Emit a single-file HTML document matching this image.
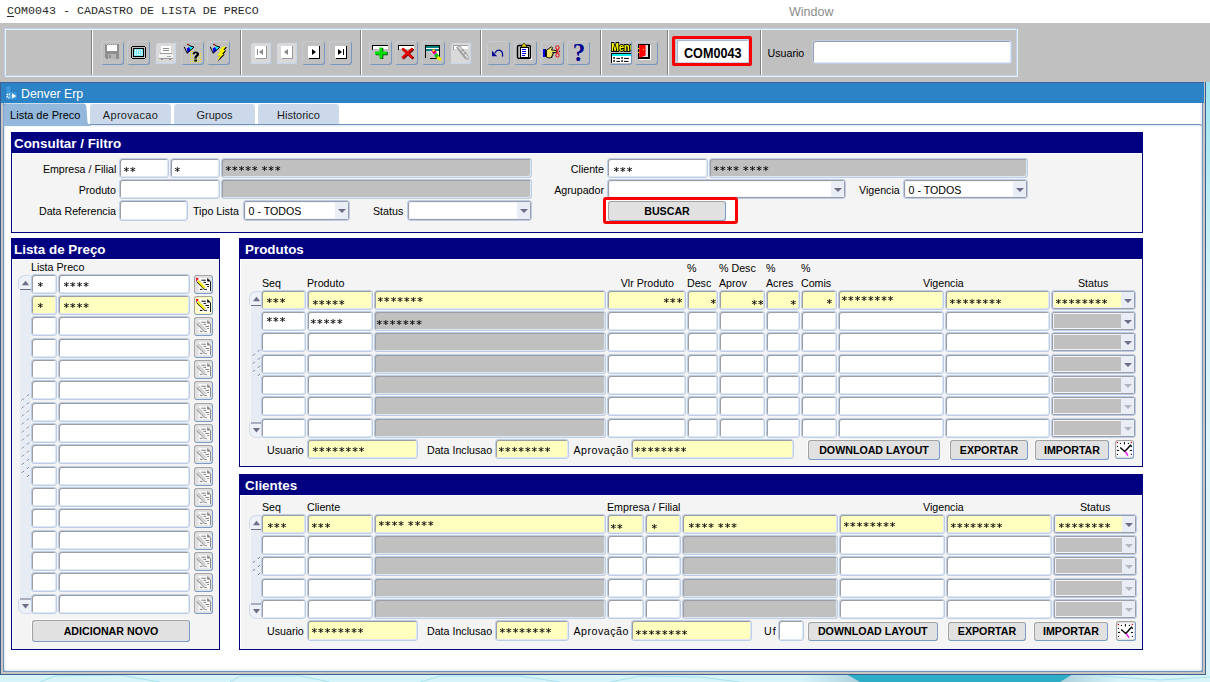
<!DOCTYPE html>
<html lang="pt-BR"><head><meta charset="utf-8"><title>COM0043 - CADASTRO DE LISTA DE PRECO</title>
<style>
html,body{margin:0;padding:0}
body{width:1210px;height:682px;position:relative;overflow:hidden;background:#fff;font-family:"Liberation Sans",sans-serif;font-size:11px;color:#000}
div,span{position:absolute;box-sizing:border-box;white-space:nowrap}
svg{position:absolute;overflow:visible}
.f{border:1px solid #bccde7;border-radius:3px;background:#fff;box-shadow:inset 1px 1px 0 0 #9c9da5,inset -1px -1px 0 0 #dfe7f3;font-family:"DejaVu Sans Mono","Liberation Mono",monospace;font-size:11px;line-height:12px;overflow:hidden;color:#000;-webkit-text-stroke:0.15px #000;word-spacing:-3.6px}
.f span{top:6px;left:6px;will-change:transform}
.l{font-size:10.67px;line-height:13px}
.r{text-align:right}
.b{border:1px solid;border-color:#a2a2a2 #7a9cc6 #7a9cc6 #a2a2a2;border-radius:3px;background:#e1e1e1;box-shadow:-1px -1px 0 #fcfcfc;font-weight:bold;font-size:10.67px;line-height:13px;text-align:center}
.ph{background:#000080;color:#fff;font-weight:bold;font-size:13.4px;line-height:15px}
.ph span{left:4px;top:4px}
.pb{background:#f4f4f4;border:1px solid #000080;border-top:none;box-shadow:inset 1px 1px 0 #fff}
.tb{border-radius:3px;box-shadow:inset -1px -1px 0 #7796c0,inset 1px 1px 0 #c7cbd2}
.tbd{background:#d9d9d9;box-shadow:inset 0 0 0 1px #c0c0c0,inset -2px -2px 0 #c6d6ec,inset 2px 2px 0 #bcc1cb}
.sep{width:2px;border-left:1px solid #808080;border-right:1px solid #fff}
.dd{border:1px solid #bccde7;border-radius:3px;background:#fff;box-shadow:inset 0 0 0 1px #9c9da6,inset 0 0 0 2px #f2f4fa;overflow:hidden;font-size:10.67px;line-height:13px}
.dd i{position:absolute;right:1px;top:1px;bottom:1px;width:13px;background:#e9edf6}
.dd i:after{content:"";position:absolute;left:3px;top:7px;border-left:4px solid transparent;border-right:4px solid transparent;border-top:4px solid #6c6e88}
.dd.dis i:after{border-top-color:#b4b6c4}
.dd span{left:4.5px;top:4px}
.y{background:#ffffc0}
.g{background:#c0c0c0}
.sb{background:#e9edf6;border-radius:6px;border:1px solid #d3deee}
</style></head>
<body>
<div style="left:0;top:0;width:1210px;height:23px;background:#fff"></div>
<div style="left:0;top:23px;width:1210px;height:59px;background:#c0c0c0"></div>
<div style="left:1204px;top:82px;width:6px;height:600px;background:linear-gradient(#9ee6f2,#b4ebf4 14%,#d4f3f8 34%,#dff6fa 60%,#d8f4f9)"></div>
<div style="left:0;top:672px;width:1210px;height:10px;background:#d6f4f9"></div>
<svg style="left:0;top:674px" width="1210" height="8" viewBox="0 674 1210 8"><defs><linearGradient id="hl" x1="0" x2="1" y1="0" y2="0"><stop offset="0" stop-color="#a8ccd8" stop-opacity="0"/><stop offset="1" stop-color="#a8ccd8" stop-opacity="0.9"/></linearGradient><linearGradient id="hr" x1="0" x2="1" y1="0" y2="0"><stop offset="0" stop-color="#a8ccd8" stop-opacity="0.9"/><stop offset="1" stop-color="#a8ccd8" stop-opacity="0"/></linearGradient></defs><path d="M800 674 L847 674 L862 682 L800 682z" fill="url(#hl)"/><path d="M1072 674 L1120 674 L1120 682 L1058 682z" fill="url(#hr)"/><path d="M846 674 L1073 674 L1060 682 L860 682z" fill="#2eaec6"/><g stroke="#a9e1ec" stroke-width="1" fill="none"><path d="M40 682 L55 676 L120 675 L160 682"/><path d="M230 682 L240 676 L300 676 L330 682"/><path d="M420 682 L440 676 L520 676 L560 682"/><path d="M610 682 L640 676 L700 677 L740 682"/><path d="M1100 676 L1160 680 L1210 677"/></g></svg>
<div style="left:7px;top:4px;font-family:'Liberation Mono',monospace;font-size:11.67px;line-height:14px;color:#2a2a2a"><u style="text-underline-offset:2px">C</u>OM0043 - CADASTRO DE LISTA DE PRECO</div>
<div style="left:789px;top:5px;font-size:12.5px;line-height:14px;color:#8c8c8c">Window</div>
<div class="" style="left:5px;top:29px;width:1013px;height:48px;border:1px solid #eaf0f9"></div>
<div class="" style="left:4px;top:28px;width:1013px;height:48px;border:1px solid #bdd1ee"></div>
<div class="sep" style="left:91px;top:30px;width:2px;height:45px;"></div>
<div class="sep" style="left:240px;top:30px;width:2px;height:45px;"></div>
<div class="sep" style="left:360px;top:30px;width:2px;height:45px;"></div>
<div class="sep" style="left:480px;top:30px;width:2px;height:45px;"></div>
<div class="sep" style="left:600px;top:30px;width:2px;height:45px;"></div>
<div class="sep" style="left:667px;top:30px;width:2px;height:45px;"></div>
<div class="sep" style="left:760px;top:30px;width:2px;height:45px;"></div>
<div class="tb" style="left:101px;top:41px;width:23px;height:24px;"></div>
<div class="tb" style="left:127px;top:41px;width:23px;height:24px;"></div>
<div class="tb tbd" style="left:154px;top:41px;width:23px;height:24px;"></div>
<div class="tb" style="left:181px;top:41px;width:23px;height:24px;"></div>
<div class="tb" style="left:207px;top:41px;width:23px;height:24px;"></div>
<div class="tb tbd" style="left:249px;top:41px;width:23px;height:24px;"></div>
<div class="tb tbd" style="left:275px;top:41px;width:23px;height:24px;"></div>
<div class="tb" style="left:302px;top:41px;width:23px;height:24px;"></div>
<div class="tb" style="left:329px;top:41px;width:23px;height:24px;"></div>
<div class="tb" style="left:369px;top:41px;width:23px;height:24px;"></div>
<div class="tb" style="left:395px;top:41px;width:23px;height:24px;"></div>
<div class="tb" style="left:422px;top:41px;width:23px;height:24px;"></div>
<div class="tb tbd" style="left:449px;top:41px;width:23px;height:24px;"></div>
<div class="tb" style="left:487px;top:41px;width:23px;height:24px;"></div>
<div class="tb" style="left:514px;top:41px;width:23px;height:24px;"></div>
<div class="tb" style="left:541px;top:41px;width:23px;height:24px;"></div>
<div class="tb" style="left:567px;top:41px;width:23px;height:24px;"></div>
<div class="tb" style="left:609px;top:41px;width:23px;height:24px;"></div>
<div class="tb" style="left:635px;top:41px;width:23px;height:24px;"></div>
<svg style="left:104px;top:44px" width="16" height="16" viewBox="0 0 16 16" shape-rendering="crispEdges"><path d="M1 0h14v15h-13l-1 -1z" fill="#8e8e8e"/><rect x="3" y="1" width="10" height="6" fill="#fff"/><rect x="4" y="10" width="8" height="5" fill="#b4b4b4"/><rect x="5" y="11" width="2" height="3" fill="#8e8e8e"/><path d="M2 0h12" stroke="#c0c0c0" stroke-dasharray="1 1"/></svg>
<svg style="left:131px;top:46px" width="15" height="13" viewBox="0 0 15 13" shape-rendering="crispEdges"><rect x="0.5" y="0.5" width="14" height="12" rx="2" fill="#c0c0c0" stroke="#000" stroke-width="1"/><rect x="2.5" y="2.5" width="10" height="8" fill="#7fe8f0" stroke="#000" stroke-width="1"/><g fill="#fff"><rect x="4" y="4" width="1" height="1"/><rect x="6" y="4" width="1" height="1"/><rect x="8" y="4" width="1" height="1"/><rect x="10" y="4" width="1" height="1"/><rect x="4" y="6" width="1" height="1"/><rect x="6" y="6" width="1" height="1"/><rect x="8" y="6" width="1" height="1"/><rect x="10" y="6" width="1" height="1"/><rect x="4" y="8" width="1" height="1"/><rect x="6" y="8" width="1" height="1"/><rect x="8" y="8" width="1" height="1"/><rect x="10" y="8" width="1" height="1"/></g></svg>
<svg style="left:158px;top:45px" width="16" height="16" viewBox="0 0 16 16" shape-rendering="crispEdges"><rect x="3" y="1" width="10" height="7" fill="#fff"/><rect x="5" y="3" width="6" height="1" fill="#8c8c8c"/><rect x="5" y="5" width="6" height="1" fill="#8c8c8c"/><path d="M2 8h12" stroke="#9a9a9a"/><rect x="1" y="9" width="14" height="4" fill="#f4f4f4"/><rect x="9" y="11" width="4" height="1" fill="#a8a8a8"/><rect x="1" y="13" width="14" height="1" fill="#9a9a9a"/><rect x="3" y="14" width="2" height="1" fill="#8c8c8c"/><rect x="11" y="14" width="2" height="1" fill="#8c8c8c"/></svg>
<svg style="left:184px;top:44px" width="18" height="19" viewBox="0 0 18 19" shape-rendering="crispEdges"><g shape-rendering="auto"><path d="M2.7 4.6L5.2 3.1L6.7 6.1L3.5 8.9z" fill="#0000e6"/><path d="M5.2 3.1L5.9 2.2L9.5 3.1L6.7 6.1z" fill="#00eeff"/><path d="M0.2 2.9L3.2 9.3L10 3.1L6.1 1.9" fill="none" stroke="#000" stroke-width="1"/><path d="M3.1 0.2L6.1 1.6" stroke="#000" stroke-width="0.9"/><circle cx="4.4" cy="0.4" r="0.7" fill="#f00000"/></g><g fill="#f4ec00" shape-rendering="auto"><rect x="6" y="7" width="1" height="1"/><rect x="8.05" y="7" width="1" height="1"/><rect x="6" y="9.03" width="1" height="1"/><rect x="8.05" y="9.03" width="1" height="1"/><rect x="16.25" y="9.03" width="1" height="1"/><rect x="6" y="11.06" width="1" height="1"/><rect x="8.05" y="11.06" width="1" height="1"/><rect x="14.2" y="11.06" width="1" height="1"/><rect x="16.25" y="11.06" width="1" height="1"/><rect x="6" y="13.09" width="1" height="1"/><rect x="8.05" y="13.09" width="1" height="1"/><rect x="14.2" y="13.09" width="1" height="1"/><rect x="16.25" y="13.09" width="1" height="1"/><rect x="6" y="15.12" width="1" height="1"/><rect x="8.05" y="15.12" width="1" height="1"/><rect x="10.1" y="15.12" width="1" height="1"/><rect x="12.15" y="15.12" width="1" height="1"/><rect x="14.2" y="15.12" width="1" height="1"/><rect x="16.25" y="15.12" width="1" height="1"/><rect x="6" y="17.15" width="1" height="1"/><rect x="8.05" y="17.15" width="1" height="1"/><rect x="10.1" y="17.15" width="1" height="1"/><rect x="12.15" y="17.15" width="1" height="1"/><rect x="14.2" y="17.15" width="1" height="1"/><rect x="16.25" y="17.15" width="1" height="1"/></g><path d="M8.6 10.2c0 -3.6 6.4 -3.6 6.4 0c0 2.2 -2.4 2 -2.4 4.2h-2.2c0 -3 2.2 -3 2.2 -4.4c0 -1.2 -1.9 -1.2 -1.9 0.2zM10.3 15.4h2.6v2h-2.6z" fill="#000" shape-rendering="auto"/></svg>
<svg style="left:210px;top:44px" width="18" height="19" viewBox="0 0 18 19" shape-rendering="crispEdges"><g shape-rendering="auto"><path d="M2.7 4.6L5.2 3.1L6.7 6.1L3.5 8.9z" fill="#0000e6"/><path d="M5.2 3.1L5.9 2.2L9.5 3.1L6.7 6.1z" fill="#00eeff"/><path d="M0.2 2.9L3.2 9.3L10 3.1L6.1 1.9" fill="none" stroke="#000" stroke-width="1"/><path d="M3.1 0.2L6.1 1.6" stroke="#000" stroke-width="0.9"/><circle cx="4.4" cy="0.4" r="0.7" fill="#f00000"/></g><g shape-rendering="auto"><path d="M12.5 2.8L16 2.5L13.3 6L15.3 6L12.2 10L13.8 10L6.5 17.3L9.8 11.8L7.2 11.8L10.6 7L9 7z" fill="#000" transform="translate(1,0.5)"/><path d="M12.5 2.8L16 2.5L13.3 6L15.3 6L12.2 10L13.8 10L6.5 17.3L9.8 11.8L7.2 11.8L10.6 7L9 7z" fill="#fbf600"/></g></svg>
<svg style="left:255px;top:46px" width="13" height="14" viewBox="0 0 13 14" shape-rendering="crispEdges"><rect x="0" y="0" width="11" height="12" fill="#fff"/><path d="M1 12.5h11M11.5 0v13" stroke="#9a9a9a" stroke-width="1" fill="none"/><rect x="2" y="3" width="1" height="6" fill="#8a8a8a"/><path d="M8 3v6l-4 -3z" fill="#8a8a8a" shape-rendering="auto"/></svg>
<svg style="left:281px;top:46px" width="13" height="14" viewBox="0 0 13 14" shape-rendering="crispEdges"><rect x="0" y="0" width="11" height="12" fill="#fff"/><path d="M1 12.5h11M11.5 0v13" stroke="#9a9a9a" stroke-width="1" fill="none"/><path d="M7 3v6l-4 -3z" fill="#8a8a8a" shape-rendering="auto"/></svg>
<svg style="left:308px;top:46px" width="13" height="14" viewBox="0 0 13 14" shape-rendering="crispEdges"><rect x="0" y="0" width="11" height="12" fill="#fff"/><path d="M1 12.5h11M11.5 0v13" stroke="#000" stroke-width="1" fill="none"/><path d="M4 3v6l4 -3z" fill="#000" shape-rendering="auto"/></svg>
<svg style="left:335px;top:46px" width="13" height="14" viewBox="0 0 13 14" shape-rendering="crispEdges"><rect x="0" y="0" width="11" height="12" fill="#fff"/><path d="M1 12.5h11M11.5 0v13" stroke="#000" stroke-width="1" fill="none"/><path d="M3 3v6l4 -3z" fill="#000" shape-rendering="auto"/><rect x="8" y="3" width="1" height="6" fill="#000"/></svg>
<svg style="left:372px;top:45px" width="16" height="14" viewBox="0 0 16 14" shape-rendering="crispEdges"><rect x="0" y="0" width="16" height="4" fill="#fff"/><path d="M0 4.5v-4h16" stroke="#000" fill="none"/><path d="M7.4 2.4h3v4h4.4v3.2h-4.4v3.8h-3v-3.8h-4.4v-3.2h4.4z" fill="#004400" transform="translate(0.9,0.7)" shape-rendering="auto"/><path d="M7.4 2.4h3v4h4.4v3.2h-4.4v3.8h-3v-3.8h-4.4v-3.2h4.4z" fill="#00e000" shape-rendering="auto"/></svg>
<svg style="left:398px;top:45px" width="16" height="14" viewBox="0 0 16 14" shape-rendering="crispEdges"><rect x="0" y="0" width="16" height="4" fill="#fff"/><path d="M0 4.5v-4h16" stroke="#000" fill="none"/><g shape-rendering="auto"><path d="M4.2 3.4L14.6 13M14.6 3.4L4.2 13" stroke="#500000" stroke-width="2.4" fill="none" transform="translate(0.8,0.6)"/><path d="M4.2 3.4L14.6 13M14.6 3.4L4.2 13" stroke="#e80000" stroke-width="2.4" fill="none"/></g></svg>
<svg style="left:425px;top:45px" width="17" height="16" viewBox="0 0 17 16" shape-rendering="crispEdges"><rect x="0.5" y="0.5" width="14" height="12" fill="#fff" stroke="#000"/><rect x="1" y="1" width="13" height="2" fill="#008080"/><rect x="1" y="4" width="13" height="2" fill="#008080"/><path d="M1 6h4l6 7h-10z" fill="#c0c0c0"/><rect x="5" y="13" width="9" height="1" fill="#000"/><g shape-rendering="auto"><path d="M6 6l3 -2l3 4l-3 2z" fill="#f000d0"/><path d="M7 5l2 -1l1 1.5l-2 1.5z" fill="#f0e000"/><path d="M9 10l3 -2l2 3l-3 2z" fill="#00c000"/><path d="M11 13l3 -2l3 4l-2 1z" fill="#f0f000"/><path d="M8 8l3 -2" stroke="#e00000" stroke-width="1.5"/></g></svg>
<svg style="left:452px;top:45px" width="17" height="16" viewBox="0 0 17 16" shape-rendering="crispEdges"><rect x="1" y="0" width="15" height="4" fill="#fff"/><path d="M1 4.5v-4h15" stroke="#a0a0a0" fill="none"/><g shape-rendering="auto"><path d="M4 2.5L7.5 0L17 11.5L16.5 15L13 14z" fill="#a4a4a4"/><path d="M6.6 1.6L16 13" stroke="#e8e8e8" stroke-width="1.3"/><path d="M8.5 7L12 4.5M10.8 10L14.3 7.5" stroke="#888" stroke-width="1"/></g></svg>
<svg style="left:491px;top:48px" width="13" height="10" viewBox="0 0 13 10" shape-rendering="crispEdges"><g shape-rendering="auto"><path d="M1 8.2l0 -5.4l5.2 5.4z" fill="#000090"/><path d="M4 5c2.5 -4.5 8.5 -3.5 7.5 3.6" stroke="#000090" stroke-width="1.25" fill="none"/></g></svg>
<svg style="left:517px;top:43px" width="16" height="18" viewBox="0 0 16 18" shape-rendering="crispEdges"><rect x="1.5" y="16" width="13.5" height="1" fill="#fff"/><rect x="14.3" y="4" width="1" height="12.5" fill="#fff"/><rect x="0.5" y="2.5" width="13" height="13" rx="1.5" fill="#c0c0c0" stroke="#000" stroke-width="1.4" shape-rendering="auto"/><rect x="3" y="4" width="8" height="10" fill="#fff" stroke="#000"/><path d="M4 4l3 -4l3 4z" fill="#f0e000" stroke="#000" stroke-width="0.6" shape-rendering="auto"/><rect x="5" y="6" width="4" height="1" fill="#0000e0"/><rect x="5" y="8" width="4" height="1" fill="#0000e0"/><rect x="5" y="10" width="4" height="1" fill="#0000e0"/><rect x="5" y="12" width="3" height="1" fill="#0000e0"/></svg>
<svg style="left:543px;top:45px" width="18" height="14" viewBox="0 0 18 14" shape-rendering="crispEdges"><rect x="0" y="4" width="2" height="8" fill="#0000e0"/><rect x="2" y="4" width="1" height="8" fill="#000"/><g shape-rendering="auto"><path d="M3.5 5L6 3.5L8.5 1.8L9.5 2.8L8.5 5L13.6 5.6L13.6 7.4L10 7.6L10.4 9L9.4 9.4L10 10.6L8.8 11L9 12.4L6 13L3.5 12.2z" fill="#ebe266" stroke="#000" stroke-width="0.9"/><path d="M9 7.6H10M9 9.4H9.6M8.6 11H9" stroke="#000" stroke-width="0.7"/><ellipse cx="14.5" cy="2.6" rx="1.7" ry="1.9" fill="none" stroke="#f00000" stroke-width="1"/><ellipse cx="14.5" cy="10.2" rx="1.7" ry="1.9" fill="none" stroke="#f00000" stroke-width="1"/><path d="M13.4 4.4l2.2 3.8M15.6 4.4l-2.2 3.8" stroke="#f00000" stroke-width="0.9"/><rect x="16" y="5.8" width="1" height="1" fill="#000"/></g></svg>
<div style="left:572px;top:41px;width:14px;height:22px;font-family:'Liberation Serif',serif;font-weight:bold;font-size:25px;line-height:24px;color:#000090;text-align:center">?</div>
<svg style="left:611px;top:42px;overflow:hidden;will-change:transform" width="19.5" height="21" viewBox="0 0 19.5 21"><text x="0.3" y="9.2" font-family="Liberation Sans, sans-serif" font-weight="bold" font-size="10.6" fill="#ffff00" stroke="#000" stroke-width="1.9" paint-order="stroke" textLength="24" lengthAdjust="spacingAndGlyphs">Menu</text><g shape-rendering="crispEdges"><rect x="0" y="11" width="19.5" height="1" fill="#000"/><rect x="0.7" y="11.8" width="19" height="1.9" fill="#00f0f8"/><rect x="0" y="13.7" width="19.5" height="0.8" fill="#000"/><rect x="0.7" y="14.4" width="19" height="6.2" fill="#fff"/><rect x="0" y="11" width="0.8" height="9.6" fill="#000"/></g><g fill="#000"><rect x="2.3" y="15.2" width="1.6" height="1.6"/><rect x="5.4" y="15.9" width="3.6" height="1"/><rect x="10.3" y="15.2" width="1.6" height="1.6"/><rect x="13" y="15.9" width="5" height="1"/><rect x="2.3" y="18.2" width="1.6" height="1.6"/><rect x="5.4" y="18.9" width="3.6" height="1"/><rect x="10.3" y="18.2" width="1.6" height="1.6"/><rect x="13" y="18.9" width="4.4" height="1"/></g></svg>
<svg style="left:638px;top:44px" width="14" height="17" viewBox="0 0 14 17" shape-rendering="crispEdges"><g shape-rendering="auto"><rect x="1" y="15" width="12" height="1" fill="#fff"/><rect x="12" y="1" width="1" height="15" fill="#fff"/><rect x="0.5" y="0.5" width="11" height="14" fill="#e2e2e2" stroke="#000" stroke-width="1"/><rect x="10" y="1" width="1" height="13.5" fill="#000"/><rect x="1" y="13" width="10" height="1.6" fill="#000"/><path d="M1.2 1H7.6V11.4L5 12.6L3 13.6H1.2z" fill="#ff0000"/><rect x="4.9" y="5" width="1.2" height="1.2" fill="#ffe000"/><rect x="0" y="4" width="1.1" height="1" fill="#ffe000"/><rect x="0" y="8" width="1.1" height="1" fill="#ffe000"/></g></svg>
<div class="" style="left:672px;top:36px;width:80px;height:30px;border:3px solid #f80000;border-radius:2px;background:#c0c0c0"></div>
<div class="" style="left:676px;top:39px;width:73px;height:24px;background:#fff;border:1px solid #c6d6ec;border-radius:2px;box-shadow:inset 1px 1px 0 #a9b6cc"></div>
<div style="left:683.6px;top:45.5px;font-weight:bold;font-size:13.8px;line-height:16px;transform:scaleX(0.915);transform-origin:0 0">COM0043</div>
<div class="l" style="left:767.5px;top:47px;">Usuario</div>
<div class="f" style="left:812px;top:40px;width:200px;height:24px;"></div>
<div style="left:0;top:82px;width:1206px;height:593px;background:#fff;border:1px solid #3f5f93;border-top:none;box-shadow:inset 2px 0 0 #c9c5c1,inset -2px -2px 0 #c9c5c1,inset 3px 0 0 #6c8cba,inset -3px -3px 0 #6c8cba,inset 5px 0 0 #eef2fa,inset -5px -5px 0 #eef2fa"></div>
<div style="left:1px;top:82px;width:1203px;height:21px;background:#2c83c5;border-top:1px solid #3f619b"></div>
<svg style="left:5px;top:85px" width="13" height="16" viewBox="0 0 13 16"><path d="M0.7 0.6H6.3V6.6H12.3V15H0.7z" fill="#3b98db" stroke="#2a7abd" stroke-width="0.9"/><path d="M8 1.2L11.4 4.6H8z" fill="#3b98db" stroke="#2a7abd" stroke-width="0.7"/><circle cx="3.9" cy="10.9" r="1.8" fill="none" stroke="#fff" stroke-width="1.7" stroke-dasharray="1.1 0.8"/><rect x="5.2" y="7.6" width="1.6" height="6.8" fill="#3b98db"/><path d="M7 8.2L11.3 10.9L7 13.6z" fill="#fff"/></svg>
<div style="left:21px;top:87px;color:#fff;font-size:12.3px;line-height:14px">Denver Erp</div>
<div class="" style="left:3px;top:124px;width:1200px;height:547.5px;border:1px solid #6f93bd;border-radius:3px;box-shadow:inset 0 0 0 1px #e6ecf6,inset 0 0 0 2px #f3f6fb;background:#fff"></div>
<div class="" style="left:90px;top:103.5px;width:81px;height:20.5px;background:#cbd9eb;border-radius:3px 3px 0 0"></div>
<div style="left:90px;top:108.5px;width:81px;text-align:center;font-size:11px;line-height:13px;color:#1c1c1c;letter-spacing:0.3px;">Aprovacao</div>
<div class="" style="left:174px;top:103.5px;width:81px;height:20.5px;background:#cbd9eb;border-radius:3px 3px 0 0"></div>
<div style="left:174px;top:108.5px;width:81px;text-align:center;font-size:11px;line-height:13px;color:#1c1c1c;">Grupos</div>
<div class="" style="left:258px;top:103.5px;width:81px;height:20.5px;background:#cbd9eb;border-radius:3px 3px 0 0"></div>
<div style="left:258px;top:108.5px;width:81px;text-align:center;font-size:11px;line-height:13px;color:#1c1c1c;">Historico</div>
<svg style="left:3px;top:103px" width="87.5" height="23" viewBox="0 0 87.5 23"><path d="M0 23V3.5Q0 0.5 3 0.5H80.5Q83 0.5 83.3 3L84.5 19Q84.8 21.5 87.5 21.5V23z" fill="#94b8dc"/><path d="M0.5 23V3.5Q0.5 0.8 3 0.8" fill="none" stroke="#7fa5d0" stroke-width="1"/></svg>
<div style="left:3px;top:108.5px;width:84.5px;text-align:center;font-size:11px;line-height:13px;color:#000;">Lista de Preco</div>
<div class="" style="left:4px;top:124px;width:83px;height:1px;background:#94b8dc"></div>
<div class="ph" style="left:11px;top:132px;width:1132px;height:21px;"><span style="left:3px">Consultar / Filtro</span></div>
<div class="pb" style="left:11px;top:153px;width:1132px;height:80px;"></div>
<div class="l r" style="right:1093.7px;top:163px;">Empresa / Filial</div>
<div class="l r" style="right:1094px;top:184px;">Produto</div>
<div class="l r" style="right:1094px;top:204.5px;">Data Referencia</div>
<div class="f " style="left:119px;top:158px;width:50px;height:20px;"><span style="left:3.2px;top:7px">**</span></div>
<div class="f " style="left:170px;top:158px;width:50px;height:20px;"><span style="left:2.7px;top:7px">*</span></div>
<div class="f g" style="left:221px;top:158px;width:311px;height:20px;"><span style="left:3px;top:5.9px">***** ***</span></div>
<div class="f " style="left:119px;top:179px;width:101px;height:20px;"></div>
<div class="f g" style="left:221px;top:179px;width:311px;height:20px;"></div>
<div class="f " style="left:119px;top:200px;width:69px;height:21px;"></div>
<div class="l" style="left:193px;top:204.5px;">Tipo Lista</div>
<div class="dd " style="left:243px;top:200px;width:107px;height:21px;"><span style="">0 - TODOS</span><i></i></div>
<div class="l" style="left:373px;top:204.5px;">Status</div>
<div class="dd " style="left:407px;top:200px;width:125px;height:21px;"><i></i></div>
<div class="l r" style="right:606px;top:163px;">Cliente</div>
<div class="l r" style="right:606px;top:184px;">Agrupador</div>
<div class="f " style="left:607px;top:158px;width:101px;height:20px;"><span style="left:4.8px;top:7px">***</span></div>
<div class="f g" style="left:709px;top:158px;width:319px;height:20px;"><span style="left:2.8px;top:6px">**** ****</span></div>
<div class="dd " style="left:607px;top:179px;width:239px;height:20px;"><i></i></div>
<div class="l" style="left:859px;top:184px;">Vigencia</div>
<div class="dd " style="left:903px;top:179px;width:125px;height:20px;"><span style="">0 - TODOS</span><i></i></div>
<div class="" style="left:603px;top:197px;width:135px;height:27px;border:3px solid #fb0000;border-radius:3px;background:#fff"></div>
<div class="b" style="left:608px;top:201px;width:118px;height:20px;padding-top:3.2px">BUSCAR</div>
<div class="ph" style="left:11px;top:238px;width:209px;height:21px;"><span style="left:3px">Lista de Preço</span></div>
<div class="pb" style="left:11px;top:259px;width:209px;height:391px;"></div>
<div class="l" style="left:31px;top:260.5px;">Lista Preco</div>
<div class="" style="left:18px;top:275px;width:13px;height:14px;background:#eef1f8;border:1px solid #cfdbec;border-bottom:none;border-right:none;border-radius:7px 2px 0 0"></div>
<div class="" style="left:18px;top:598.5px;width:13px;height:15px;background:#eef1f8;border:1px solid #cfdbec;border-top:none;border-right:none;border-radius:0 0 2px 7px"></div>
<div class="" style="left:20px;top:289px;width:11px;height:309.5px;background:#e7ebf4"></div>
<svg style="left:18px;top:275px" width="13" height="338.5" viewBox="0 0 13 338.5"><path d="M3.9 10.2 l3.6 -4.4 l3.6 4.4z" fill="#6c6e88"/><rect x="2" y="14" width="11" height="1" fill="#6c6e88"/><path d="M3.9 329.1 l3.6 4.4 l3.6 -4.4z" fill="#6c6e88"/><rect x="2" y="323.5" width="11" height="1" fill="#6c6e88"/>
<path d="M8.9 121.4 l2 -2" stroke="#5f6f98" stroke-width="1" fill="none"/><path d="M8.9 122.4 l2 -2" stroke="#fff" stroke-width="0.8" fill="none"/><path d="M3.8 125.43 l2 -2" stroke="#5f6f98" stroke-width="1" fill="none"/><path d="M3.8 126.43 l2 -2" stroke="#fff" stroke-width="0.8" fill="none"/><path d="M8.9 129.46 l2 -2" stroke="#5f6f98" stroke-width="1" fill="none"/><path d="M8.9 130.46 l2 -2" stroke="#fff" stroke-width="0.8" fill="none"/><path d="M3.8 133.49 l2 -2" stroke="#5f6f98" stroke-width="1" fill="none"/><path d="M3.8 134.49 l2 -2" stroke="#fff" stroke-width="0.8" fill="none"/><path d="M8.9 137.52 l2 -2" stroke="#5f6f98" stroke-width="1" fill="none"/><path d="M8.9 138.52 l2 -2" stroke="#fff" stroke-width="0.8" fill="none"/><path d="M3.8 141.55 l2 -2" stroke="#5f6f98" stroke-width="1" fill="none"/><path d="M3.8 142.55 l2 -2" stroke="#fff" stroke-width="0.8" fill="none"/><path d="M8.9 145.58 l2 -2" stroke="#5f6f98" stroke-width="1" fill="none"/><path d="M8.9 146.58 l2 -2" stroke="#fff" stroke-width="0.8" fill="none"/><path d="M3.8 149.61 l2 -2" stroke="#5f6f98" stroke-width="1" fill="none"/><path d="M3.8 150.61 l2 -2" stroke="#fff" stroke-width="0.8" fill="none"/><path d="M8.9 153.64 l2 -2" stroke="#5f6f98" stroke-width="1" fill="none"/><path d="M8.9 154.64 l2 -2" stroke="#fff" stroke-width="0.8" fill="none"/><path d="M3.8 157.67 l2 -2" stroke="#5f6f98" stroke-width="1" fill="none"/><path d="M3.8 158.67 l2 -2" stroke="#fff" stroke-width="0.8" fill="none"/><path d="M8.9 161.7 l2 -2" stroke="#5f6f98" stroke-width="1" fill="none"/><path d="M8.9 162.7 l2 -2" stroke="#fff" stroke-width="0.8" fill="none"/><path d="M3.8 165.73 l2 -2" stroke="#5f6f98" stroke-width="1" fill="none"/><path d="M3.8 166.73 l2 -2" stroke="#fff" stroke-width="0.8" fill="none"/><path d="M8.9 169.76 l2 -2" stroke="#5f6f98" stroke-width="1" fill="none"/><path d="M8.9 170.76 l2 -2" stroke="#fff" stroke-width="0.8" fill="none"/><path d="M3.8 173.79 l2 -2" stroke="#5f6f98" stroke-width="1" fill="none"/><path d="M3.8 174.79 l2 -2" stroke="#fff" stroke-width="0.8" fill="none"/><path d="M8.9 177.82 l2 -2" stroke="#5f6f98" stroke-width="1" fill="none"/><path d="M8.9 178.82 l2 -2" stroke="#fff" stroke-width="0.8" fill="none"/><path d="M3.8 181.85 l2 -2" stroke="#5f6f98" stroke-width="1" fill="none"/><path d="M3.8 182.85 l2 -2" stroke="#fff" stroke-width="0.8" fill="none"/><path d="M8.9 185.88 l2 -2" stroke="#5f6f98" stroke-width="1" fill="none"/><path d="M8.9 186.88 l2 -2" stroke="#fff" stroke-width="0.8" fill="none"/><path d="M3.8 189.91 l2 -2" stroke="#5f6f98" stroke-width="1" fill="none"/><path d="M3.8 190.91 l2 -2" stroke="#fff" stroke-width="0.8" fill="none"/><path d="M8.9 193.94 l2 -2" stroke="#5f6f98" stroke-width="1" fill="none"/><path d="M8.9 194.94 l2 -2" stroke="#fff" stroke-width="0.8" fill="none"/><path d="M3.8 197.97 l2 -2" stroke="#5f6f98" stroke-width="1" fill="none"/><path d="M3.8 198.97 l2 -2" stroke="#fff" stroke-width="0.8" fill="none"/><path d="M8.9 202 l2 -2" stroke="#5f6f98" stroke-width="1" fill="none"/><path d="M8.9 203 l2 -2" stroke="#fff" stroke-width="0.8" fill="none"/></svg>
<div class="f " style="left:31px;top:274px;width:26px;height:20px;"><span style="left:4.9px;top:6.1px">*</span></div>
<div class="f " style="left:58px;top:274px;width:132px;height:20px;"><span style="left:3.8px;top:6.1px">****</span></div>
<div class="" style="left:194px;top:275px;width:19px;height:18.5px;background:#e1e1e1;border:1px solid;border-color:#a4a4a4 #7a9cc6 #7a9cc6 #a4a4a4;border-radius:3px"></div>
<svg style="left:196px;top:277px" width="15" height="15" viewBox="0 0 15 15" shape-rendering="crispEdges"><g shape-rendering="auto"><path d="M2.7 1H11.2L14.9 4.5V14.2H2.7z" fill="#fff"/><path d="M11.2 1L14.9 4.5H11.2z" fill="#000"/><rect x="14" y="4.5" width="0.9" height="9.5" fill="#000"/><g fill="#000"><rect x="5.4" y="2.7" width="4.4" height="1"/><rect x="7.5" y="4.9" width="2.5" height="1"/><rect x="9.5" y="7" width="3.4" height="1"/><rect x="11.3" y="9" width="1.6" height="1"/><rect x="3.9" y="11.9" width="2.5" height="1"/><rect x="8.5" y="11.9" width="2.3" height="1"/></g><path d="M2.3 3L9.6 10.6" stroke="#c4c4c4" stroke-width="1.1"/><path d="M0.7 4.3L8.2 12L10.6 12.6" stroke="#000" stroke-width="1.2" fill="none"/><path d="M1.5 3.6L8.9 11.3" stroke="#fbf400" stroke-width="2"/><path d="M8.2 12L10.6 12.6L9.6 10.6z" fill="#fff"/><rect x="0" y="1" width="2.3" height="1.8" fill="#ff0000"/><rect x="0" y="2.8" width="1.1" height="1.2" fill="#e000e0"/></g></svg>
<div class="f y" style="left:31px;top:295px;width:26px;height:20px;"><span style="left:4.9px;top:6.1px">*</span></div>
<div class="f y" style="left:58px;top:295px;width:132px;height:20px;"><span style="left:3.8px;top:6.1px">****</span></div>
<div class="" style="left:194px;top:296px;width:19px;height:18.5px;background:#ffffc0;border:1px solid;border-color:#a4a4a4 #7a9cc6 #7a9cc6 #a4a4a4;border-radius:3px"></div>
<svg style="left:196px;top:298px" width="15" height="15" viewBox="0 0 15 15" shape-rendering="crispEdges"><g shape-rendering="auto"><path d="M2.7 1H11.2L14.9 4.5V14.2H2.7z" fill="#fff"/><path d="M11.2 1L14.9 4.5H11.2z" fill="#000"/><rect x="14" y="4.5" width="0.9" height="9.5" fill="#000"/><g fill="#000"><rect x="5.4" y="2.7" width="4.4" height="1"/><rect x="7.5" y="4.9" width="2.5" height="1"/><rect x="9.5" y="7" width="3.4" height="1"/><rect x="11.3" y="9" width="1.6" height="1"/><rect x="3.9" y="11.9" width="2.5" height="1"/><rect x="8.5" y="11.9" width="2.3" height="1"/></g><path d="M2.3 3L9.6 10.6" stroke="#c4c4c4" stroke-width="1.1"/><path d="M0.7 4.3L8.2 12L10.6 12.6" stroke="#000" stroke-width="1.2" fill="none"/><path d="M1.5 3.6L8.9 11.3" stroke="#fbf400" stroke-width="2"/><path d="M8.2 12L10.6 12.6L9.6 10.6z" fill="#fff"/><rect x="0" y="1" width="2.3" height="1.8" fill="#ff0000"/><rect x="0" y="2.8" width="1.1" height="1.2" fill="#e000e0"/></g></svg>
<div class="f " style="left:31px;top:316px;width:26px;height:20px;"></div>
<div class="f " style="left:58px;top:316px;width:132px;height:20px;"></div>
<div class="" style="left:194px;top:317px;width:19px;height:18.5px;background:#e1e1e1;border:1px solid;border-color:#a4a4a4 #7a9cc6 #7a9cc6 #a4a4a4;border-radius:3px"></div>
<svg style="left:196px;top:319px" width="15" height="15" viewBox="0 0 15 15" shape-rendering="crispEdges"><g shape-rendering="auto"><path d="M2.7 1H11.2L14.9 4.5V14.2H2.7z" fill="#f8f8f8"/><path d="M11.2 1L14.9 4.5H11.2z" fill="#7e7e7e"/><rect x="14" y="4.5" width="0.9" height="9.5" fill="#7e7e7e"/><g fill="#7e7e7e"><rect x="5.4" y="2.7" width="4.4" height="1"/><rect x="7.5" y="4.9" width="2.5" height="1"/><rect x="9.5" y="7" width="3.4" height="1"/><rect x="11.3" y="9" width="1.6" height="1"/><rect x="3.9" y="11.9" width="2.5" height="1"/><rect x="8.5" y="11.9" width="2.3" height="1"/></g><path d="M2.3 3L9.6 10.6" stroke="#bcbcbc" stroke-width="1.1"/><path d="M0.7 4.3L8.2 12L10.6 12.6" stroke="#7e7e7e" stroke-width="1.2" fill="none"/><path d="M1.5 3.6L8.9 11.3" stroke="#d6d6d6" stroke-width="2"/><path d="M8.2 12L10.6 12.6L9.6 10.6z" fill="#f8f8f8"/></g></svg>
<div class="f " style="left:31px;top:338px;width:26px;height:20px;"></div>
<div class="f " style="left:58px;top:338px;width:132px;height:20px;"></div>
<div class="" style="left:194px;top:339px;width:19px;height:18.5px;background:#e1e1e1;border:1px solid;border-color:#a4a4a4 #7a9cc6 #7a9cc6 #a4a4a4;border-radius:3px"></div>
<svg style="left:196px;top:341px" width="15" height="15" viewBox="0 0 15 15" shape-rendering="crispEdges"><g shape-rendering="auto"><path d="M2.7 1H11.2L14.9 4.5V14.2H2.7z" fill="#f8f8f8"/><path d="M11.2 1L14.9 4.5H11.2z" fill="#7e7e7e"/><rect x="14" y="4.5" width="0.9" height="9.5" fill="#7e7e7e"/><g fill="#7e7e7e"><rect x="5.4" y="2.7" width="4.4" height="1"/><rect x="7.5" y="4.9" width="2.5" height="1"/><rect x="9.5" y="7" width="3.4" height="1"/><rect x="11.3" y="9" width="1.6" height="1"/><rect x="3.9" y="11.9" width="2.5" height="1"/><rect x="8.5" y="11.9" width="2.3" height="1"/></g><path d="M2.3 3L9.6 10.6" stroke="#bcbcbc" stroke-width="1.1"/><path d="M0.7 4.3L8.2 12L10.6 12.6" stroke="#7e7e7e" stroke-width="1.2" fill="none"/><path d="M1.5 3.6L8.9 11.3" stroke="#d6d6d6" stroke-width="2"/><path d="M8.2 12L10.6 12.6L9.6 10.6z" fill="#f8f8f8"/></g></svg>
<div class="f " style="left:31px;top:359px;width:26px;height:20px;"></div>
<div class="f " style="left:58px;top:359px;width:132px;height:20px;"></div>
<div class="" style="left:194px;top:360px;width:19px;height:18.5px;background:#e1e1e1;border:1px solid;border-color:#a4a4a4 #7a9cc6 #7a9cc6 #a4a4a4;border-radius:3px"></div>
<svg style="left:196px;top:362px" width="15" height="15" viewBox="0 0 15 15" shape-rendering="crispEdges"><g shape-rendering="auto"><path d="M2.7 1H11.2L14.9 4.5V14.2H2.7z" fill="#f8f8f8"/><path d="M11.2 1L14.9 4.5H11.2z" fill="#7e7e7e"/><rect x="14" y="4.5" width="0.9" height="9.5" fill="#7e7e7e"/><g fill="#7e7e7e"><rect x="5.4" y="2.7" width="4.4" height="1"/><rect x="7.5" y="4.9" width="2.5" height="1"/><rect x="9.5" y="7" width="3.4" height="1"/><rect x="11.3" y="9" width="1.6" height="1"/><rect x="3.9" y="11.9" width="2.5" height="1"/><rect x="8.5" y="11.9" width="2.3" height="1"/></g><path d="M2.3 3L9.6 10.6" stroke="#bcbcbc" stroke-width="1.1"/><path d="M0.7 4.3L8.2 12L10.6 12.6" stroke="#7e7e7e" stroke-width="1.2" fill="none"/><path d="M1.5 3.6L8.9 11.3" stroke="#d6d6d6" stroke-width="2"/><path d="M8.2 12L10.6 12.6L9.6 10.6z" fill="#f8f8f8"/></g></svg>
<div class="f " style="left:31px;top:380px;width:26px;height:20px;"></div>
<div class="f " style="left:58px;top:380px;width:132px;height:20px;"></div>
<div class="" style="left:194px;top:381px;width:19px;height:18.5px;background:#e1e1e1;border:1px solid;border-color:#a4a4a4 #7a9cc6 #7a9cc6 #a4a4a4;border-radius:3px"></div>
<svg style="left:196px;top:383px" width="15" height="15" viewBox="0 0 15 15" shape-rendering="crispEdges"><g shape-rendering="auto"><path d="M2.7 1H11.2L14.9 4.5V14.2H2.7z" fill="#f8f8f8"/><path d="M11.2 1L14.9 4.5H11.2z" fill="#7e7e7e"/><rect x="14" y="4.5" width="0.9" height="9.5" fill="#7e7e7e"/><g fill="#7e7e7e"><rect x="5.4" y="2.7" width="4.4" height="1"/><rect x="7.5" y="4.9" width="2.5" height="1"/><rect x="9.5" y="7" width="3.4" height="1"/><rect x="11.3" y="9" width="1.6" height="1"/><rect x="3.9" y="11.9" width="2.5" height="1"/><rect x="8.5" y="11.9" width="2.3" height="1"/></g><path d="M2.3 3L9.6 10.6" stroke="#bcbcbc" stroke-width="1.1"/><path d="M0.7 4.3L8.2 12L10.6 12.6" stroke="#7e7e7e" stroke-width="1.2" fill="none"/><path d="M1.5 3.6L8.9 11.3" stroke="#d6d6d6" stroke-width="2"/><path d="M8.2 12L10.6 12.6L9.6 10.6z" fill="#f8f8f8"/></g></svg>
<div class="f " style="left:31px;top:402px;width:26px;height:20px;"></div>
<div class="f " style="left:58px;top:402px;width:132px;height:20px;"></div>
<div class="" style="left:194px;top:403px;width:19px;height:18.5px;background:#e1e1e1;border:1px solid;border-color:#a4a4a4 #7a9cc6 #7a9cc6 #a4a4a4;border-radius:3px"></div>
<svg style="left:196px;top:405px" width="15" height="15" viewBox="0 0 15 15" shape-rendering="crispEdges"><g shape-rendering="auto"><path d="M2.7 1H11.2L14.9 4.5V14.2H2.7z" fill="#f8f8f8"/><path d="M11.2 1L14.9 4.5H11.2z" fill="#7e7e7e"/><rect x="14" y="4.5" width="0.9" height="9.5" fill="#7e7e7e"/><g fill="#7e7e7e"><rect x="5.4" y="2.7" width="4.4" height="1"/><rect x="7.5" y="4.9" width="2.5" height="1"/><rect x="9.5" y="7" width="3.4" height="1"/><rect x="11.3" y="9" width="1.6" height="1"/><rect x="3.9" y="11.9" width="2.5" height="1"/><rect x="8.5" y="11.9" width="2.3" height="1"/></g><path d="M2.3 3L9.6 10.6" stroke="#bcbcbc" stroke-width="1.1"/><path d="M0.7 4.3L8.2 12L10.6 12.6" stroke="#7e7e7e" stroke-width="1.2" fill="none"/><path d="M1.5 3.6L8.9 11.3" stroke="#d6d6d6" stroke-width="2"/><path d="M8.2 12L10.6 12.6L9.6 10.6z" fill="#f8f8f8"/></g></svg>
<div class="f " style="left:31px;top:423px;width:26px;height:20px;"></div>
<div class="f " style="left:58px;top:423px;width:132px;height:20px;"></div>
<div class="" style="left:194px;top:424px;width:19px;height:18.5px;background:#e1e1e1;border:1px solid;border-color:#a4a4a4 #7a9cc6 #7a9cc6 #a4a4a4;border-radius:3px"></div>
<svg style="left:196px;top:426px" width="15" height="15" viewBox="0 0 15 15" shape-rendering="crispEdges"><g shape-rendering="auto"><path d="M2.7 1H11.2L14.9 4.5V14.2H2.7z" fill="#f8f8f8"/><path d="M11.2 1L14.9 4.5H11.2z" fill="#7e7e7e"/><rect x="14" y="4.5" width="0.9" height="9.5" fill="#7e7e7e"/><g fill="#7e7e7e"><rect x="5.4" y="2.7" width="4.4" height="1"/><rect x="7.5" y="4.9" width="2.5" height="1"/><rect x="9.5" y="7" width="3.4" height="1"/><rect x="11.3" y="9" width="1.6" height="1"/><rect x="3.9" y="11.9" width="2.5" height="1"/><rect x="8.5" y="11.9" width="2.3" height="1"/></g><path d="M2.3 3L9.6 10.6" stroke="#bcbcbc" stroke-width="1.1"/><path d="M0.7 4.3L8.2 12L10.6 12.6" stroke="#7e7e7e" stroke-width="1.2" fill="none"/><path d="M1.5 3.6L8.9 11.3" stroke="#d6d6d6" stroke-width="2"/><path d="M8.2 12L10.6 12.6L9.6 10.6z" fill="#f8f8f8"/></g></svg>
<div class="f " style="left:31px;top:444px;width:26px;height:20px;"></div>
<div class="f " style="left:58px;top:444px;width:132px;height:20px;"></div>
<div class="" style="left:194px;top:445px;width:19px;height:18.5px;background:#e1e1e1;border:1px solid;border-color:#a4a4a4 #7a9cc6 #7a9cc6 #a4a4a4;border-radius:3px"></div>
<svg style="left:196px;top:447px" width="15" height="15" viewBox="0 0 15 15" shape-rendering="crispEdges"><g shape-rendering="auto"><path d="M2.7 1H11.2L14.9 4.5V14.2H2.7z" fill="#f8f8f8"/><path d="M11.2 1L14.9 4.5H11.2z" fill="#7e7e7e"/><rect x="14" y="4.5" width="0.9" height="9.5" fill="#7e7e7e"/><g fill="#7e7e7e"><rect x="5.4" y="2.7" width="4.4" height="1"/><rect x="7.5" y="4.9" width="2.5" height="1"/><rect x="9.5" y="7" width="3.4" height="1"/><rect x="11.3" y="9" width="1.6" height="1"/><rect x="3.9" y="11.9" width="2.5" height="1"/><rect x="8.5" y="11.9" width="2.3" height="1"/></g><path d="M2.3 3L9.6 10.6" stroke="#bcbcbc" stroke-width="1.1"/><path d="M0.7 4.3L8.2 12L10.6 12.6" stroke="#7e7e7e" stroke-width="1.2" fill="none"/><path d="M1.5 3.6L8.9 11.3" stroke="#d6d6d6" stroke-width="2"/><path d="M8.2 12L10.6 12.6L9.6 10.6z" fill="#f8f8f8"/></g></svg>
<div class="f " style="left:31px;top:466px;width:26px;height:20px;"></div>
<div class="f " style="left:58px;top:466px;width:132px;height:20px;"></div>
<div class="" style="left:194px;top:467px;width:19px;height:18.5px;background:#e1e1e1;border:1px solid;border-color:#a4a4a4 #7a9cc6 #7a9cc6 #a4a4a4;border-radius:3px"></div>
<svg style="left:196px;top:469px" width="15" height="15" viewBox="0 0 15 15" shape-rendering="crispEdges"><g shape-rendering="auto"><path d="M2.7 1H11.2L14.9 4.5V14.2H2.7z" fill="#f8f8f8"/><path d="M11.2 1L14.9 4.5H11.2z" fill="#7e7e7e"/><rect x="14" y="4.5" width="0.9" height="9.5" fill="#7e7e7e"/><g fill="#7e7e7e"><rect x="5.4" y="2.7" width="4.4" height="1"/><rect x="7.5" y="4.9" width="2.5" height="1"/><rect x="9.5" y="7" width="3.4" height="1"/><rect x="11.3" y="9" width="1.6" height="1"/><rect x="3.9" y="11.9" width="2.5" height="1"/><rect x="8.5" y="11.9" width="2.3" height="1"/></g><path d="M2.3 3L9.6 10.6" stroke="#bcbcbc" stroke-width="1.1"/><path d="M0.7 4.3L8.2 12L10.6 12.6" stroke="#7e7e7e" stroke-width="1.2" fill="none"/><path d="M1.5 3.6L8.9 11.3" stroke="#d6d6d6" stroke-width="2"/><path d="M8.2 12L10.6 12.6L9.6 10.6z" fill="#f8f8f8"/></g></svg>
<div class="f " style="left:31px;top:487px;width:26px;height:20px;"></div>
<div class="f " style="left:58px;top:487px;width:132px;height:20px;"></div>
<div class="" style="left:194px;top:488px;width:19px;height:18.5px;background:#e1e1e1;border:1px solid;border-color:#a4a4a4 #7a9cc6 #7a9cc6 #a4a4a4;border-radius:3px"></div>
<svg style="left:196px;top:490px" width="15" height="15" viewBox="0 0 15 15" shape-rendering="crispEdges"><g shape-rendering="auto"><path d="M2.7 1H11.2L14.9 4.5V14.2H2.7z" fill="#f8f8f8"/><path d="M11.2 1L14.9 4.5H11.2z" fill="#7e7e7e"/><rect x="14" y="4.5" width="0.9" height="9.5" fill="#7e7e7e"/><g fill="#7e7e7e"><rect x="5.4" y="2.7" width="4.4" height="1"/><rect x="7.5" y="4.9" width="2.5" height="1"/><rect x="9.5" y="7" width="3.4" height="1"/><rect x="11.3" y="9" width="1.6" height="1"/><rect x="3.9" y="11.9" width="2.5" height="1"/><rect x="8.5" y="11.9" width="2.3" height="1"/></g><path d="M2.3 3L9.6 10.6" stroke="#bcbcbc" stroke-width="1.1"/><path d="M0.7 4.3L8.2 12L10.6 12.6" stroke="#7e7e7e" stroke-width="1.2" fill="none"/><path d="M1.5 3.6L8.9 11.3" stroke="#d6d6d6" stroke-width="2"/><path d="M8.2 12L10.6 12.6L9.6 10.6z" fill="#f8f8f8"/></g></svg>
<div class="f " style="left:31px;top:508px;width:26px;height:20px;"></div>
<div class="f " style="left:58px;top:508px;width:132px;height:20px;"></div>
<div class="" style="left:194px;top:509px;width:19px;height:18.5px;background:#e1e1e1;border:1px solid;border-color:#a4a4a4 #7a9cc6 #7a9cc6 #a4a4a4;border-radius:3px"></div>
<svg style="left:196px;top:511px" width="15" height="15" viewBox="0 0 15 15" shape-rendering="crispEdges"><g shape-rendering="auto"><path d="M2.7 1H11.2L14.9 4.5V14.2H2.7z" fill="#f8f8f8"/><path d="M11.2 1L14.9 4.5H11.2z" fill="#7e7e7e"/><rect x="14" y="4.5" width="0.9" height="9.5" fill="#7e7e7e"/><g fill="#7e7e7e"><rect x="5.4" y="2.7" width="4.4" height="1"/><rect x="7.5" y="4.9" width="2.5" height="1"/><rect x="9.5" y="7" width="3.4" height="1"/><rect x="11.3" y="9" width="1.6" height="1"/><rect x="3.9" y="11.9" width="2.5" height="1"/><rect x="8.5" y="11.9" width="2.3" height="1"/></g><path d="M2.3 3L9.6 10.6" stroke="#bcbcbc" stroke-width="1.1"/><path d="M0.7 4.3L8.2 12L10.6 12.6" stroke="#7e7e7e" stroke-width="1.2" fill="none"/><path d="M1.5 3.6L8.9 11.3" stroke="#d6d6d6" stroke-width="2"/><path d="M8.2 12L10.6 12.6L9.6 10.6z" fill="#f8f8f8"/></g></svg>
<div class="f " style="left:31px;top:530px;width:26px;height:20px;"></div>
<div class="f " style="left:58px;top:530px;width:132px;height:20px;"></div>
<div class="" style="left:194px;top:531px;width:19px;height:18.5px;background:#e1e1e1;border:1px solid;border-color:#a4a4a4 #7a9cc6 #7a9cc6 #a4a4a4;border-radius:3px"></div>
<svg style="left:196px;top:533px" width="15" height="15" viewBox="0 0 15 15" shape-rendering="crispEdges"><g shape-rendering="auto"><path d="M2.7 1H11.2L14.9 4.5V14.2H2.7z" fill="#f8f8f8"/><path d="M11.2 1L14.9 4.5H11.2z" fill="#7e7e7e"/><rect x="14" y="4.5" width="0.9" height="9.5" fill="#7e7e7e"/><g fill="#7e7e7e"><rect x="5.4" y="2.7" width="4.4" height="1"/><rect x="7.5" y="4.9" width="2.5" height="1"/><rect x="9.5" y="7" width="3.4" height="1"/><rect x="11.3" y="9" width="1.6" height="1"/><rect x="3.9" y="11.9" width="2.5" height="1"/><rect x="8.5" y="11.9" width="2.3" height="1"/></g><path d="M2.3 3L9.6 10.6" stroke="#bcbcbc" stroke-width="1.1"/><path d="M0.7 4.3L8.2 12L10.6 12.6" stroke="#7e7e7e" stroke-width="1.2" fill="none"/><path d="M1.5 3.6L8.9 11.3" stroke="#d6d6d6" stroke-width="2"/><path d="M8.2 12L10.6 12.6L9.6 10.6z" fill="#f8f8f8"/></g></svg>
<div class="f " style="left:31px;top:551px;width:26px;height:20px;"></div>
<div class="f " style="left:58px;top:551px;width:132px;height:20px;"></div>
<div class="" style="left:194px;top:552px;width:19px;height:18.5px;background:#e1e1e1;border:1px solid;border-color:#a4a4a4 #7a9cc6 #7a9cc6 #a4a4a4;border-radius:3px"></div>
<svg style="left:196px;top:554px" width="15" height="15" viewBox="0 0 15 15" shape-rendering="crispEdges"><g shape-rendering="auto"><path d="M2.7 1H11.2L14.9 4.5V14.2H2.7z" fill="#f8f8f8"/><path d="M11.2 1L14.9 4.5H11.2z" fill="#7e7e7e"/><rect x="14" y="4.5" width="0.9" height="9.5" fill="#7e7e7e"/><g fill="#7e7e7e"><rect x="5.4" y="2.7" width="4.4" height="1"/><rect x="7.5" y="4.9" width="2.5" height="1"/><rect x="9.5" y="7" width="3.4" height="1"/><rect x="11.3" y="9" width="1.6" height="1"/><rect x="3.9" y="11.9" width="2.5" height="1"/><rect x="8.5" y="11.9" width="2.3" height="1"/></g><path d="M2.3 3L9.6 10.6" stroke="#bcbcbc" stroke-width="1.1"/><path d="M0.7 4.3L8.2 12L10.6 12.6" stroke="#7e7e7e" stroke-width="1.2" fill="none"/><path d="M1.5 3.6L8.9 11.3" stroke="#d6d6d6" stroke-width="2"/><path d="M8.2 12L10.6 12.6L9.6 10.6z" fill="#f8f8f8"/></g></svg>
<div class="f " style="left:31px;top:572px;width:26px;height:20px;"></div>
<div class="f " style="left:58px;top:572px;width:132px;height:20px;"></div>
<div class="" style="left:194px;top:573px;width:19px;height:18.5px;background:#e1e1e1;border:1px solid;border-color:#a4a4a4 #7a9cc6 #7a9cc6 #a4a4a4;border-radius:3px"></div>
<svg style="left:196px;top:575px" width="15" height="15" viewBox="0 0 15 15" shape-rendering="crispEdges"><g shape-rendering="auto"><path d="M2.7 1H11.2L14.9 4.5V14.2H2.7z" fill="#f8f8f8"/><path d="M11.2 1L14.9 4.5H11.2z" fill="#7e7e7e"/><rect x="14" y="4.5" width="0.9" height="9.5" fill="#7e7e7e"/><g fill="#7e7e7e"><rect x="5.4" y="2.7" width="4.4" height="1"/><rect x="7.5" y="4.9" width="2.5" height="1"/><rect x="9.5" y="7" width="3.4" height="1"/><rect x="11.3" y="9" width="1.6" height="1"/><rect x="3.9" y="11.9" width="2.5" height="1"/><rect x="8.5" y="11.9" width="2.3" height="1"/></g><path d="M2.3 3L9.6 10.6" stroke="#bcbcbc" stroke-width="1.1"/><path d="M0.7 4.3L8.2 12L10.6 12.6" stroke="#7e7e7e" stroke-width="1.2" fill="none"/><path d="M1.5 3.6L8.9 11.3" stroke="#d6d6d6" stroke-width="2"/><path d="M8.2 12L10.6 12.6L9.6 10.6z" fill="#f8f8f8"/></g></svg>
<div class="f " style="left:31px;top:594px;width:26px;height:20px;"></div>
<div class="f " style="left:58px;top:594px;width:132px;height:20px;"></div>
<div class="" style="left:194px;top:595px;width:19px;height:18.5px;background:#e1e1e1;border:1px solid;border-color:#a4a4a4 #7a9cc6 #7a9cc6 #a4a4a4;border-radius:3px"></div>
<svg style="left:196px;top:597px" width="15" height="15" viewBox="0 0 15 15" shape-rendering="crispEdges"><g shape-rendering="auto"><path d="M2.7 1H11.2L14.9 4.5V14.2H2.7z" fill="#f8f8f8"/><path d="M11.2 1L14.9 4.5H11.2z" fill="#7e7e7e"/><rect x="14" y="4.5" width="0.9" height="9.5" fill="#7e7e7e"/><g fill="#7e7e7e"><rect x="5.4" y="2.7" width="4.4" height="1"/><rect x="7.5" y="4.9" width="2.5" height="1"/><rect x="9.5" y="7" width="3.4" height="1"/><rect x="11.3" y="9" width="1.6" height="1"/><rect x="3.9" y="11.9" width="2.5" height="1"/><rect x="8.5" y="11.9" width="2.3" height="1"/></g><path d="M2.3 3L9.6 10.6" stroke="#bcbcbc" stroke-width="1.1"/><path d="M0.7 4.3L8.2 12L10.6 12.6" stroke="#7e7e7e" stroke-width="1.2" fill="none"/><path d="M1.5 3.6L8.9 11.3" stroke="#d6d6d6" stroke-width="2"/><path d="M8.2 12L10.6 12.6L9.6 10.6z" fill="#f8f8f8"/></g></svg>
<div class="b" style="left:32px;top:619.5px;width:158px;height:22px;padding-top:4.2px">ADICIONAR NOVO</div>
<div class="ph" style="left:239px;top:238px;width:904px;height:21px;"><span style="left:6px">Produtos</span></div>
<div class="pb" style="left:239px;top:259px;width:904px;height:207.5px;"></div>
<div class="l" style="left:262px;top:276.5px;">Seq</div>
<div class="l" style="left:307px;top:276.5px;">Produto</div>
<div class="l r" style="right:536px;top:276.5px;">Vlr Produto</div>
<div class="l" style="left:687px;top:261.5px;">%</div>
<div class="l" style="left:687px;top:276.5px;">Desc</div>
<div class="l" style="left:719px;top:261.5px;">% Desc</div>
<div class="l" style="left:719px;top:276.5px;">Aprov</div>
<div class="l" style="left:766px;top:261.5px;">%</div>
<div class="l" style="left:766px;top:276.5px;">Acres</div>
<div class="l" style="left:801px;top:261.5px;">%</div>
<div class="l" style="left:801px;top:276.5px;">Comis</div>
<div class="l" style="left:923px;top:276.5px;">Vigencia</div>
<div class="l" style="left:1078px;top:276.5px;">Status</div>
<div class="" style="left:249px;top:291px;width:13px;height:14px;background:#eef1f8;border:1px solid #cfdbec;border-bottom:none;border-right:none;border-radius:7px 2px 0 0"></div>
<div class="" style="left:249px;top:422.5px;width:13px;height:15px;background:#eef1f8;border:1px solid #cfdbec;border-top:none;border-right:none;border-radius:0 0 2px 7px"></div>
<div class="" style="left:251px;top:305px;width:11px;height:117.5px;background:#e7ebf4"></div>
<svg style="left:249px;top:291px" width="13" height="146.5" viewBox="0 0 13 146.5"><path d="M3.9 10.2 l3.6 -4.4 l3.6 4.4z" fill="#6c6e88"/><rect x="2" y="14" width="11" height="1" fill="#6c6e88"/><path d="M3.9 137.1 l3.6 4.4 l3.6 -4.4z" fill="#6c6e88"/><rect x="2" y="131.5" width="11" height="1" fill="#6c6e88"/>
<path d="M8.9 60.8 l2 -2" stroke="#5f6f98" stroke-width="1" fill="none"/><path d="M8.9 61.8 l2 -2" stroke="#fff" stroke-width="0.8" fill="none"/><path d="M3.8 64.83 l2 -2" stroke="#5f6f98" stroke-width="1" fill="none"/><path d="M3.8 65.83 l2 -2" stroke="#fff" stroke-width="0.8" fill="none"/><path d="M8.9 68.86 l2 -2" stroke="#5f6f98" stroke-width="1" fill="none"/><path d="M8.9 69.86 l2 -2" stroke="#fff" stroke-width="0.8" fill="none"/><path d="M3.8 72.89 l2 -2" stroke="#5f6f98" stroke-width="1" fill="none"/><path d="M3.8 73.89 l2 -2" stroke="#fff" stroke-width="0.8" fill="none"/><path d="M8.9 76.92 l2 -2" stroke="#5f6f98" stroke-width="1" fill="none"/><path d="M8.9 77.92 l2 -2" stroke="#fff" stroke-width="0.8" fill="none"/><path d="M3.8 80.95 l2 -2" stroke="#5f6f98" stroke-width="1" fill="none"/><path d="M3.8 81.95 l2 -2" stroke="#fff" stroke-width="0.8" fill="none"/><path d="M8.9 84.98 l2 -2" stroke="#5f6f98" stroke-width="1" fill="none"/><path d="M8.9 85.98 l2 -2" stroke="#fff" stroke-width="0.8" fill="none"/></svg>
<div class="f y" style="left:261px;top:290px;width:45px;height:20px;"><span style="left:4.2px;top:6.4px">***</span></div>
<div class="f y" style="left:307px;top:290px;width:66px;height:20px;"><span style="left:4.2px;top:8px">*****</span></div>
<div class="f y" style="left:374px;top:290px;width:232px;height:20px;"><span style="left:2.2px;top:5.4px">*******</span></div>
<div class="f y" style="left:607px;top:290px;width:79px;height:20px;"><span style="left:auto;right:2.2px;top:6.4px">***</span></div>
<div class="f y" style="left:687px;top:290px;width:31px;height:20px;"><span style="left:auto;right:0.6px;top:7px">*</span></div>
<div class="f y" style="left:719px;top:290px;width:46px;height:20px;"><span style="left:auto;right:-0.2px;top:8px">**</span></div>
<div class="f y" style="left:766px;top:290px;width:34px;height:20px;"><span style="left:auto;right:2.8px;top:8px">*</span></div>
<div class="f y" style="left:801px;top:290px;width:36px;height:20px;"><span style="left:auto;right:3.2px;top:7px">*</span></div>
<div class="f y" style="left:838px;top:290px;width:106px;height:20px;"><span style="left:1.8px;top:4.4px">********</span></div>
<div class="f y" style="left:945px;top:290px;width:105px;height:20px;"><span style="left:3.2px;top:7px">********</span></div>
<div class="dd y" style="left:1051px;top:290px;width:85px;height:20px;"><span style="left:2.8px;top:7px;font-family:'DejaVu Sans Mono','Liberation Mono',monospace;font-size:11px;color:#000;-webkit-text-stroke:0.15px #000;line-height:12px;word-spacing:-3.6px;will-change:transform">********</span><i></i></div>
<div class="f " style="left:261px;top:311px;width:45px;height:20px;"><span style="left:4.2px;top:4px">***</span></div>
<div class="f " style="left:307px;top:311px;width:66px;height:20px;"><span style="left:2.2px;top:6.4px">*****</span></div>
<div class="f g" style="left:374px;top:311px;width:232px;height:20px;"><span style="left:1.2px;top:7.4px">*******</span></div>
<div class="f " style="left:607px;top:311px;width:79px;height:20px;"></div>
<div class="f " style="left:687px;top:311px;width:31px;height:20px;"></div>
<div class="f " style="left:719px;top:311px;width:46px;height:20px;"></div>
<div class="f " style="left:766px;top:311px;width:34px;height:20px;"></div>
<div class="f " style="left:801px;top:311px;width:36px;height:20px;"></div>
<div class="f " style="left:838px;top:311px;width:106px;height:20px;"></div>
<div class="f " style="left:945px;top:311px;width:105px;height:20px;"></div>
<div class="dd g" style="left:1051px;top:311px;width:85px;height:20px;"><i></i></div>
<div class="f " style="left:261px;top:332px;width:45px;height:20px;"></div>
<div class="f " style="left:307px;top:332px;width:66px;height:20px;"></div>
<div class="f g" style="left:374px;top:332px;width:232px;height:20px;"></div>
<div class="f " style="left:607px;top:332px;width:79px;height:20px;"></div>
<div class="f " style="left:687px;top:332px;width:31px;height:20px;"></div>
<div class="f " style="left:719px;top:332px;width:46px;height:20px;"></div>
<div class="f " style="left:766px;top:332px;width:34px;height:20px;"></div>
<div class="f " style="left:801px;top:332px;width:36px;height:20px;"></div>
<div class="f " style="left:838px;top:332px;width:106px;height:20px;"></div>
<div class="f " style="left:945px;top:332px;width:105px;height:20px;"></div>
<div class="dd g" style="left:1051px;top:332px;width:85px;height:20px;"><i></i></div>
<div class="f " style="left:261px;top:354px;width:45px;height:20px;"></div>
<div class="f " style="left:307px;top:354px;width:66px;height:20px;"></div>
<div class="f g" style="left:374px;top:354px;width:232px;height:20px;"></div>
<div class="f " style="left:607px;top:354px;width:79px;height:20px;"></div>
<div class="f " style="left:687px;top:354px;width:31px;height:20px;"></div>
<div class="f " style="left:719px;top:354px;width:46px;height:20px;"></div>
<div class="f " style="left:766px;top:354px;width:34px;height:20px;"></div>
<div class="f " style="left:801px;top:354px;width:36px;height:20px;"></div>
<div class="f " style="left:838px;top:354px;width:106px;height:20px;"></div>
<div class="f " style="left:945px;top:354px;width:105px;height:20px;"></div>
<div class="dd g" style="left:1051px;top:354px;width:85px;height:20px;"><i></i></div>
<div class="f " style="left:261px;top:375px;width:45px;height:20px;"></div>
<div class="f " style="left:307px;top:375px;width:66px;height:20px;"></div>
<div class="f g" style="left:374px;top:375px;width:232px;height:20px;"></div>
<div class="f " style="left:607px;top:375px;width:79px;height:20px;"></div>
<div class="f " style="left:687px;top:375px;width:31px;height:20px;"></div>
<div class="f " style="left:719px;top:375px;width:46px;height:20px;"></div>
<div class="f " style="left:766px;top:375px;width:34px;height:20px;"></div>
<div class="f " style="left:801px;top:375px;width:36px;height:20px;"></div>
<div class="f " style="left:838px;top:375px;width:106px;height:20px;"></div>
<div class="f " style="left:945px;top:375px;width:105px;height:20px;"></div>
<div class="dd g dis" style="left:1051px;top:375px;width:85px;height:20px;"><i></i></div>
<div class="f " style="left:261px;top:396px;width:45px;height:20px;"></div>
<div class="f " style="left:307px;top:396px;width:66px;height:20px;"></div>
<div class="f g" style="left:374px;top:396px;width:232px;height:20px;"></div>
<div class="f " style="left:607px;top:396px;width:79px;height:20px;"></div>
<div class="f " style="left:687px;top:396px;width:31px;height:20px;"></div>
<div class="f " style="left:719px;top:396px;width:46px;height:20px;"></div>
<div class="f " style="left:766px;top:396px;width:34px;height:20px;"></div>
<div class="f " style="left:801px;top:396px;width:36px;height:20px;"></div>
<div class="f " style="left:838px;top:396px;width:106px;height:20px;"></div>
<div class="f " style="left:945px;top:396px;width:105px;height:20px;"></div>
<div class="dd g dis" style="left:1051px;top:396px;width:85px;height:20px;"><i></i></div>
<div class="f " style="left:261px;top:418px;width:45px;height:20px;"></div>
<div class="f " style="left:307px;top:418px;width:66px;height:20px;"></div>
<div class="f g" style="left:374px;top:418px;width:232px;height:20px;"></div>
<div class="f " style="left:607px;top:418px;width:79px;height:20px;"></div>
<div class="f " style="left:687px;top:418px;width:31px;height:20px;"></div>
<div class="f " style="left:719px;top:418px;width:46px;height:20px;"></div>
<div class="f " style="left:766px;top:418px;width:34px;height:20px;"></div>
<div class="f " style="left:801px;top:418px;width:36px;height:20px;"></div>
<div class="f " style="left:838px;top:418px;width:106px;height:20px;"></div>
<div class="f " style="left:945px;top:418px;width:105px;height:20px;"></div>
<div class="dd g dis" style="left:1051px;top:418px;width:85px;height:20px;"><i></i></div>
<div class="l" style="left:267px;top:443.5px;">Usuario</div>
<div class="f y" style="left:307px;top:439px;width:111px;height:20px;"><span style="left:4.2px;top:6.4px">********</span></div>
<div class="l" style="left:427px;top:443.5px;">Data Inclusao</div>
<div class="f y" style="left:495px;top:439px;width:74px;height:20px;"><span style="left:2.2px;top:6.4px">********</span></div>
<div class="l" style="left:573.5px;top:443.5px;letter-spacing:0.5px">Aprovação</div>
<div class="f y" style="left:631px;top:439px;width:163px;height:20px;"><span style="left:2.2px;top:6.4px">********</span></div>
<div class="b" style="left:808px;top:440px;width:132px;height:19.5px;padding-top:2.95px">DOWNLOAD LAYOUT</div>
<div class="b" style="left:950px;top:440px;width:78px;height:19.5px;padding-top:2.95px">EXPORTAR</div>
<div class="b" style="left:1035px;top:440px;width:74px;height:19.5px;padding-top:2.95px">IMPORTAR</div>
<div class="" style="left:1115px;top:440px;width:19px;height:19px;background:#e1e1e1;border:1px solid;border-color:#a4a4a4 #7a9cc6 #7a9cc6 #a4a4a4;border-radius:3px"></div>
<svg style="left:1116px;top:441px" width="17" height="17" viewBox="0 0 17 17" shape-rendering="crispEdges"><g shape-rendering="auto"><rect x="0.5" y="0.5" width="16.5" height="15" fill="#fff"/><circle cx="1.4" cy="1.5" r="0.75" fill="#ff0000"/><circle cx="15.4" cy="1.5" r="0.75" fill="#ff0000"/><g fill="#000"><circle cx="4.4" cy="2.4" r="0.6"/><circle cx="12.4" cy="2.4" r="0.6"/><rect x="7.9" y="1" width="1" height="2.5"/><circle cx="1.5" cy="5.4" r="0.6"/><rect x="0.9" y="8.9" width="2.2" height="1"/><circle cx="1.5" cy="13.4" r="0.6"/><circle cx="15.4" cy="5.3" r="0.6"/><rect x="13.9" y="8.9" width="2.2" height="1"/><circle cx="15.4" cy="13.4" r="0.6"/></g><path d="M4.2 6.4L8.8 10.5L14.5 4.3L15.4 5" stroke="#000" stroke-width="1.4" fill="none"/><path d="M9.3 10.6L12 14.6" stroke="#ff00ff" stroke-width="1.4"/></g></svg>
<div class="ph" style="left:239px;top:474px;width:904px;height:21px;"><span style="left:6px">Clientes</span></div>
<div class="pb" style="left:239px;top:495px;width:904px;height:155px;"></div>
<div class="l" style="left:262px;top:500.5px;">Seq</div>
<div class="l" style="left:307px;top:500.5px;">Cliente</div>
<div class="l" style="left:607px;top:500.5px;">Empresa / Filial</div>
<div class="l" style="left:923px;top:500.5px;">Vigencia</div>
<div class="l" style="left:1080px;top:500.5px;">Status</div>
<div class="" style="left:249px;top:515px;width:13px;height:14px;background:#eef1f8;border:1px solid #cfdbec;border-bottom:none;border-right:none;border-radius:7px 2px 0 0"></div>
<div class="" style="left:249px;top:603.5px;width:13px;height:15px;background:#eef1f8;border:1px solid #cfdbec;border-top:none;border-right:none;border-radius:0 0 2px 7px"></div>
<div class="" style="left:251px;top:529px;width:11px;height:74.5px;background:#e7ebf4"></div>
<svg style="left:249px;top:515px" width="13" height="103.5" viewBox="0 0 13 103.5"><path d="M3.9 10.2 l3.6 -4.4 l3.6 4.4z" fill="#6c6e88"/><rect x="2" y="14" width="11" height="1" fill="#6c6e88"/><path d="M3.9 94.1 l3.6 4.4 l3.6 -4.4z" fill="#6c6e88"/><rect x="2" y="88.5" width="11" height="1" fill="#6c6e88"/>
<path d="M8.9 44 l2 -2" stroke="#5f6f98" stroke-width="1" fill="none"/><path d="M8.9 45 l2 -2" stroke="#fff" stroke-width="0.8" fill="none"/><path d="M3.8 48.03 l2 -2" stroke="#5f6f98" stroke-width="1" fill="none"/><path d="M3.8 49.03 l2 -2" stroke="#fff" stroke-width="0.8" fill="none"/><path d="M8.9 52.06 l2 -2" stroke="#5f6f98" stroke-width="1" fill="none"/><path d="M8.9 53.06 l2 -2" stroke="#fff" stroke-width="0.8" fill="none"/><path d="M3.8 56.09 l2 -2" stroke="#5f6f98" stroke-width="1" fill="none"/><path d="M3.8 57.09 l2 -2" stroke="#fff" stroke-width="0.8" fill="none"/><path d="M8.9 60.12 l2 -2" stroke="#5f6f98" stroke-width="1" fill="none"/><path d="M8.9 61.12 l2 -2" stroke="#fff" stroke-width="0.8" fill="none"/></svg>
<div class="f y" style="left:261px;top:514px;width:45px;height:20px;"><span style="left:5.2px;top:7.1px">***</span></div>
<div class="f y" style="left:307px;top:514px;width:66px;height:20px;"><span style="left:3px;top:7.1px">***</span></div>
<div class="f y" style="left:374px;top:514px;width:232px;height:20px;"><span style="left:2.8px;top:5.2px">**** ****</span></div>
<div class="f y" style="left:607px;top:514px;width:37px;height:20px;"><span style="left:1.9px;top:8.3px">**</span></div>
<div class="f y" style="left:645px;top:514px;width:36px;height:20px;"><span style="left:4.8px;top:8.3px">*</span></div>
<div class="f y" style="left:682px;top:514px;width:156px;height:20px;"><span style="left:5.2px;top:7px">**** ***</span></div>
<div class="f y" style="left:839px;top:514px;width:106px;height:20px;"><span style="left:3.2px;top:6px">********</span></div>
<div class="f y" style="left:946px;top:514px;width:106px;height:20px;"><span style="left:3px;top:7.3px">********</span></div>
<div class="dd y" style="left:1053px;top:514px;width:84px;height:20px;"><span style="left:4.2px;top:7.3px;font-family:'DejaVu Sans Mono','Liberation Mono',monospace;font-size:11px;color:#000;-webkit-text-stroke:0.15px #000;line-height:12px;word-spacing:-3.6px;will-change:transform">********</span><i></i></div>
<div class="f " style="left:261px;top:535px;width:45px;height:20px;"></div>
<div class="f " style="left:307px;top:535px;width:66px;height:20px;"></div>
<div class="f g" style="left:374px;top:535px;width:232px;height:20px;"></div>
<div class="f " style="left:607px;top:535px;width:37px;height:20px;"></div>
<div class="f " style="left:645px;top:535px;width:36px;height:20px;"></div>
<div class="f g" style="left:682px;top:535px;width:156px;height:20px;"></div>
<div class="f " style="left:839px;top:535px;width:106px;height:20px;"></div>
<div class="f " style="left:946px;top:535px;width:106px;height:20px;"></div>
<div class="dd g dis" style="left:1053px;top:535px;width:84px;height:20px;"><i></i></div>
<div class="f " style="left:261px;top:556px;width:45px;height:20px;"></div>
<div class="f " style="left:307px;top:556px;width:66px;height:20px;"></div>
<div class="f g" style="left:374px;top:556px;width:232px;height:20px;"></div>
<div class="f " style="left:607px;top:556px;width:37px;height:20px;"></div>
<div class="f " style="left:645px;top:556px;width:36px;height:20px;"></div>
<div class="f g" style="left:682px;top:556px;width:156px;height:20px;"></div>
<div class="f " style="left:839px;top:556px;width:106px;height:20px;"></div>
<div class="f " style="left:946px;top:556px;width:106px;height:20px;"></div>
<div class="dd g dis" style="left:1053px;top:556px;width:84px;height:20px;"><i></i></div>
<div class="f " style="left:261px;top:578px;width:45px;height:20px;"></div>
<div class="f " style="left:307px;top:578px;width:66px;height:20px;"></div>
<div class="f g" style="left:374px;top:578px;width:232px;height:20px;"></div>
<div class="f " style="left:607px;top:578px;width:37px;height:20px;"></div>
<div class="f " style="left:645px;top:578px;width:36px;height:20px;"></div>
<div class="f g" style="left:682px;top:578px;width:156px;height:20px;"></div>
<div class="f " style="left:839px;top:578px;width:106px;height:20px;"></div>
<div class="f " style="left:946px;top:578px;width:106px;height:20px;"></div>
<div class="dd g dis" style="left:1053px;top:578px;width:84px;height:20px;"><i></i></div>
<div class="f " style="left:261px;top:599px;width:45px;height:20px;"></div>
<div class="f " style="left:307px;top:599px;width:66px;height:20px;"></div>
<div class="f g" style="left:374px;top:599px;width:232px;height:20px;"></div>
<div class="f " style="left:607px;top:599px;width:37px;height:20px;"></div>
<div class="f " style="left:645px;top:599px;width:36px;height:20px;"></div>
<div class="f g" style="left:682px;top:599px;width:156px;height:20px;"></div>
<div class="f " style="left:839px;top:599px;width:106px;height:20px;"></div>
<div class="f " style="left:946px;top:599px;width:106px;height:20px;"></div>
<div class="dd g dis" style="left:1053px;top:599px;width:84px;height:20px;"><i></i></div>
<div class="l" style="left:267px;top:624.5px;">Usuario</div>
<div class="f y" style="left:307px;top:620px;width:111px;height:21px;"><span style="left:3.2px;top:6.1px">********</span></div>
<div class="l" style="left:427px;top:624.5px;">Data Inclusao</div>
<div class="f y" style="left:495px;top:620px;width:74px;height:21px;"><span style="left:2.7px;top:6.1px">********</span></div>
<div class="l" style="left:573.5px;top:624.5px;letter-spacing:0.5px">Aprovação</div>
<div class="f y" style="left:631px;top:620px;width:121px;height:21px;"><span style="left:3.2px;top:7.8px">********</span></div>
<div class="l" style="left:764px;top:624.5px;letter-spacing:1px">Uf</div>
<div class="f " style="left:778px;top:620px;width:26px;height:21px;"></div>
<div class="b" style="left:807.5px;top:621.5px;width:130.5px;height:19.5px;padding-top:2.95px">DOWNLOAD LAYOUT</div>
<div class="b" style="left:948px;top:621.5px;width:78px;height:19.5px;padding-top:2.95px">EXPORTAR</div>
<div class="b" style="left:1034px;top:621.5px;width:74px;height:19.5px;padding-top:2.95px">IMPORTAR</div>
<div class="" style="left:1116px;top:621px;width:20px;height:20px;background:#e1e1e1;border:1px solid;border-color:#a4a4a4 #7a9cc6 #7a9cc6 #a4a4a4;border-radius:3px"></div>
<svg style="left:1117.4px;top:622.5px" width="17" height="17" viewBox="0 0 17 17" shape-rendering="crispEdges"><g shape-rendering="auto"><rect x="0.5" y="0.5" width="16.5" height="15" fill="#fff"/><circle cx="1.4" cy="1.5" r="0.75" fill="#ff0000"/><circle cx="15.4" cy="1.5" r="0.75" fill="#ff0000"/><g fill="#000"><circle cx="4.4" cy="2.4" r="0.6"/><circle cx="12.4" cy="2.4" r="0.6"/><rect x="7.9" y="1" width="1" height="2.5"/><circle cx="1.5" cy="5.4" r="0.6"/><rect x="0.9" y="8.9" width="2.2" height="1"/><circle cx="1.5" cy="13.4" r="0.6"/><circle cx="15.4" cy="5.3" r="0.6"/><rect x="13.9" y="8.9" width="2.2" height="1"/><circle cx="15.4" cy="13.4" r="0.6"/></g><path d="M4.2 6.4L8.8 10.5L14.5 4.3L15.4 5" stroke="#000" stroke-width="1.4" fill="none"/><path d="M9.3 10.6L12 14.6" stroke="#ff00ff" stroke-width="1.4"/></g></svg>
</body></html>
